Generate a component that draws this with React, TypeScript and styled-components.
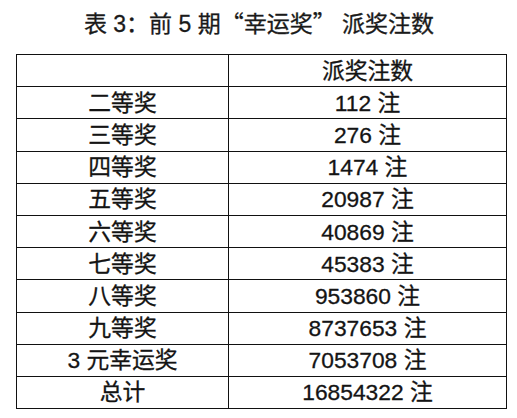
import React from 'react';
import styled, { createGlobalStyle } from 'styled-components';

const GlobalStyle = createGlobalStyle`
  html, body {
    margin: 0;
    padding: 0;
    background: #ffffff;
  }
  body {
    font-family: "Liberation Sans", "Noto Sans CJK SC", sans-serif;
    color: #111111;
  }
`;

const Page = styled.div`
  width: 517px;
  height: 418px;
  display: flex;
  flex-direction: column;
  align-items: center;
  padding-top: 7px;
  box-sizing: border-box;
`;

const Title = styled.h1`
  margin: 0 0 0 1px;
  height: 30px;
  line-height: 30px;
  font-size: 23px;
  font-weight: 400;
  -webkit-text-stroke: 0.3px #1a1a1a;
  white-space: pre;
  color: #1a1a1a;
`;

const Quote = styled.span`
  font-family: "Noto Sans CJK SC", sans-serif;
`;

const Table = styled.table`
  align-self: flex-start;
  margin: 17px 0 0 16px;
  width: 488px;
  border-collapse: collapse;
  table-layout: fixed;
`;

const Row = styled.tr`
  height: 32.2px;
`;

const Cell = styled.td<{ $wide?: boolean }>`
  width: ${({ $wide }) => ($wide ? '277px' : '211px')};
  padding: 0;
  border: 1px solid #111111;
  text-align: center;
  vertical-align: middle;
  font-size: 22.8px;
  font-weight: 400;
  -webkit-text-stroke: 0.3px #141414;
  line-height: 30px;
  white-space: pre;
  color: #141414;
`;

const rows: [string, string][] = [
  ['二等奖', '112 注'],
  ['三等奖', '276 注'],
  ['四等奖', '1474 注'],
  ['五等奖', '20987 注'],
  ['六等奖', '40869 注'],
  ['七等奖', '45383 注'],
  ['八等奖', '953860 注'],
  ['九等奖', '8737653 注'],
  ['3 元幸运奖', '7053708 注'],
  ['总计', '16854322 注'],
];

const App = () => {
  return (
    <Page>
      <GlobalStyle />
      <Title>
        表 3：前 5 期<Quote>“</Quote>幸运奖<Quote>”</Quote> 派奖注数
      </Title>
      <Table>
        <tbody>
          <Row>
            <Cell />
            <Cell $wide>派奖注数</Cell>
          </Row>
          {rows.map(([label, count]) => (
            <Row key={label}>
              <Cell>{label}</Cell>
              <Cell $wide>{count}</Cell>
            </Row>
          ))}
        </tbody>
      </Table>
    </Page>
  );
};

export default App;
